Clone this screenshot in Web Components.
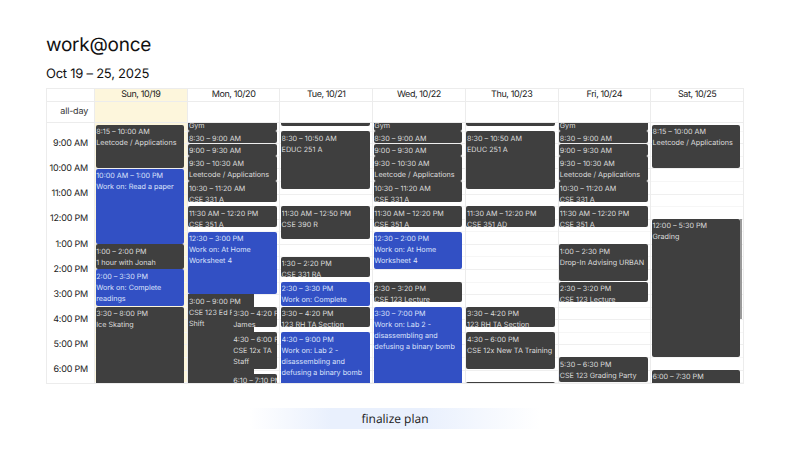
<!DOCTYPE html>
<html>
<head>
<meta charset="utf-8">
<style>
  html, body { margin: 0; background: #fff; }
  body { width: 806px; height: 467px; overflow: hidden; font-family: Inter, "Liberation Sans", sans-serif; text-rendering: geometricPrecision; }
</style>
</head>
<body>
<plan-page>
  <week-calendar>
    <day-column label="Sun, 10/19" today>
      <cal-event start="8:15" end="10:00" label="8:15 – 10:00 AM">Leetcode / Applications</cal-event>
      <cal-event start="10:00" end="13:00" label="10:00 AM – 1:00 PM" kind="work">Work on: Read a paper</cal-event>
      <cal-event start="13:00" end="14:00" label="1:00 – 2:00 PM">1 hour with Jonah</cal-event>
      <cal-event start="14:00" end="15:30" label="2:00 – 3:30 PM" kind="work">Work on: Complete readings</cal-event>
      <cal-event start="15:30" end="20:00" label="3:30 – 8:00 PM">Ice Skating</cal-event>
    </day-column>
    <day-column label="Mon, 10/20">
      <cal-event start="7:35" end="8:30" label="7:35 – 8:30 AM">Gym</cal-event>
      <cal-event start="8:30" end="9:00" label="8:30 – 9:00 AM"></cal-event>
      <cal-event start="9:00" end="9:30" label="9:00 – 9:30 AM"></cal-event>
      <cal-event start="9:30" end="10:30" label="9:30 – 10:30 AM">Leetcode / Applications</cal-event>
      <cal-event start="10:30" end="11:20" label="10:30 – 11:20 AM">CSE 331 A</cal-event>
      <cal-event start="11:30" end="12:20" label="11:30 AM – 12:20 PM">CSE 351 A</cal-event>
      <cal-event start="12:30" end="15:00" label="12:30 – 3:00 PM" kind="work">Work on: At Home Worksheet 4</cal-event>
      <cal-event start="15:00" end="21:00" label="3:00 – 9:00 PM" lane="back">CSE 123 Ed Forum Shift</cal-event>
      <cal-event start="15:30" end="16:20" label="3:30 – 4:20 PM" lane="front">James</cal-event>
      <cal-event start="16:30" end="18:00" label="4:30 – 6:00 PM" lane="front">CSE 12x TA Staff Training</cal-event>
      <cal-event start="18:10" end="19:10" label="6:10 – 7:10 PM" lane="front"></cal-event>
    </day-column>
    <day-column label="Tue, 10/21">
      <cal-event start="7:00" end="8:20" label="7:00 – 8:20 AM"></cal-event>
      <cal-event start="8:30" end="10:50" label="8:30 – 10:50 AM">EDUC 251 A</cal-event>
      <cal-event start="11:30" end="12:50" label="11:30 AM – 12:50 PM">CSE 390 R</cal-event>
      <cal-event start="13:30" end="14:20" label="1:30 – 2:20 PM">CSE 331 RA</cal-event>
      <cal-event start="14:30" end="15:30" label="2:30 – 3:30 PM" kind="work">Work on: Complete readings</cal-event>
      <cal-event start="15:30" end="16:20" label="3:30 – 4:20 PM">123 RH TA Section</cal-event>
      <cal-event start="16:30" end="21:00" label="4:30 – 9:00 PM" kind="work">Work on: Lab 2 - disassembling and defusing a binary bomb</cal-event>
    </day-column>
    <day-column label="Wed, 10/22">
      <cal-event start="7:35" end="8:30" label="7:35 – 8:30 AM">Gym</cal-event>
      <cal-event start="8:30" end="9:00" label="8:30 – 9:00 AM"></cal-event>
      <cal-event start="9:00" end="9:30" label="9:00 – 9:30 AM"></cal-event>
      <cal-event start="9:30" end="10:30" label="9:30 – 10:30 AM">Leetcode / Applications</cal-event>
      <cal-event start="10:30" end="11:20" label="10:30 – 11:20 AM">CSE 331 A</cal-event>
      <cal-event start="11:30" end="12:20" label="11:30 AM – 12:20 PM">CSE 351 A</cal-event>
      <cal-event start="12:30" end="14:00" label="12:30 – 2:00 PM" kind="work">Work on: At Home Worksheet 4</cal-event>
      <cal-event start="14:30" end="15:20" label="2:30 – 3:20 PM">CSE 123 Lecture</cal-event>
      <cal-event start="15:30" end="19:00" label="3:30 – 7:00 PM" kind="work">Work on: Lab 2 - disassembling and defusing a binary bomb</cal-event>
    </day-column>
    <day-column label="Thu, 10/23">
      <cal-event start="7:00" end="8:20" label="7:00 – 8:20 AM"></cal-event>
      <cal-event start="8:30" end="10:50" label="8:30 – 10:50 AM">EDUC 251 A</cal-event>
      <cal-event start="11:30" end="12:20" label="11:30 AM – 12:20 PM">CSE 351 AD</cal-event>
      <cal-event start="15:30" end="16:20" label="3:30 – 4:20 PM">123 RH TA Section</cal-event>
      <cal-event start="16:30" end="18:00" label="4:30 – 6:00 PM">CSE 12x New TA Training</cal-event>
      <cal-event start="18:30" end="19:30" label="6:30 – 7:30 PM"></cal-event>
    </day-column>
    <day-column label="Fri, 10/24">
      <cal-event start="7:35" end="8:30" label="7:35 – 8:30 AM">Gym</cal-event>
      <cal-event start="8:30" end="9:00" label="8:30 – 9:00 AM"></cal-event>
      <cal-event start="9:00" end="9:30" label="9:00 – 9:30 AM"></cal-event>
      <cal-event start="9:30" end="10:30" label="9:30 – 10:30 AM">Leetcode / Applications</cal-event>
      <cal-event start="10:30" end="11:20" label="10:30 – 11:20 AM">CSE 331 A</cal-event>
      <cal-event start="11:30" end="12:20" label="11:30 AM – 12:20 PM">CSE 351 A</cal-event>
      <cal-event start="13:00" end="14:30" label="1:00 – 2:30 PM">Drop-In Advising URBAN</cal-event>
      <cal-event start="14:30" end="15:20" label="2:30 – 3:20 PM">CSE 123 Lecture</cal-event>
      <cal-event start="17:30" end="18:30" label="5:30 – 6:30 PM">CSE 123 Grading Party</cal-event>
    </day-column>
    <day-column label="Sat, 10/25">
      <cal-event start="8:15" end="10:00" label="8:15 – 10:00 AM">Leetcode / Applications</cal-event>
      <cal-event start="12:00" end="17:30" label="12:00 – 5:30 PM">Grading</cal-event>
      <cal-event start="18:00" end="19:30" label="6:00 – 7:30 PM"></cal-event>
      <scroll-thumb start="12:00" end="16:00"></scroll-thumb>
    </day-column>
  </week-calendar>
</plan-page>

<script>
const HOUR = 25.15;
const SLOT = HOUR / 12;      // 5 minute rows
const FIRST_HOUR = 7;
const SLOTS = 14 * 12;
const SKIP = 29.7;           // calendar is scrolled down a bit

const toRow = (t) => {
    const [h, m] = t.split(':').map(Number);
    return (h - FIRST_HOUR) * 12 + Math.round(m / 5) + 1;
};

customElements.define('plan-page', class PlanPage extends HTMLElement {
    constructor() {
        super();
        this.attachShadow({ mode: "open" });
        this.shadowRoot.innerHTML = `
            <style>
                :host { display: block; padding: 33px 62px 0 46px; color: #111; }
                h1 { margin: 0; font: 400 19px/23px Inter, sans-serif; letter-spacing: -0.25px; }
                h2 { margin: 10px 0 5px; font: 400 13px/17px Inter, sans-serif; letter-spacing: -0.25px; }
                .foot { display: flex; justify-content: center; margin: 24px 0 0 -46px; width: 806px; }
            </style>
            <h1>work@once</h1>
            <h2>Oct 19 – 25, 2025</h2>
            <slot></slot>
            <div class="foot"><finalize-button>finalize plan</finalize-button></div>
        `;
    }
});

customElements.define('finalize-button', class FinalizeButton extends HTMLElement {
    constructor() {
        super();
        this.attachShadow({ mode: "open" });
        this.shadowRoot.innerHTML = `
            <style>
                :host {
                    display: block;
                    width: 290px;
                    margin-left: -16px;
                    text-align: center;
                    font: 400 12px/21px "Open Sans", sans-serif;
                    color: #1a1a1a;
                    background: linear-gradient(90deg, #fff 0%, #e9f0fd 28%, #e9f0fd 60%, #fff 100%);
                }
            </style>
            <slot></slot>
        `;
    }
});

customElements.define('week-calendar', class WeekCalendar extends HTMLElement {
    constructor() {
        super();
        this.attachShadow({ mode: "open" });
    }

    connectedCallback() {
        const hours = ['7:00 AM', '8:00 AM', '9:00 AM', '10:00 AM', '11:00 AM', '12:00 PM', '1:00 PM', '2:00 PM',
            '3:00 PM', '4:00 PM', '5:00 PM', '6:00 PM', '7:00 PM'];
        this.shadowRoot.innerHTML = `
            <style>
                :host { display: block; width: 698px; height: 296px; border: 1px solid #ececec; box-sizing: border-box; }
                .wrap { display: flex; height: 100%; }
                .times { width: 47px; flex: none; display: flex; flex-direction: column; }
                .head { height: 12px; border-bottom: 1px solid #ececec; }
                .allday {
                    height: 20px; border-bottom: 1px solid #ececec;
                    font: 400 9px/20px Inter, sans-serif; letter-spacing: -0.2px; color: #333;
                    text-align: right; padding-right: 6px;
                }
                .clip { flex: 1; overflow: hidden; min-height: 0; }
                .rows { margin-top: ${-SKIP - HOUR / 2}px; }
                .rows div {
                    height: ${HOUR}px;
                    font: 400 9px/${HOUR}px Inter, sans-serif;
                    letter-spacing: -0.2px;
                    white-space: nowrap;
                    color: #222;
                    text-align: right;
                    padding-right: 6px;
                }
                .days { flex: 1; min-width: 0; display: grid; grid-template-columns: repeat(7, minmax(0, 1fr)); }
            </style>
            <div class="wrap">
                <div class="times">
                    <div class="head"></div>
                    <div class="allday">all-day</div>
                    <div class="clip"><div class="rows">${hours.map(h => `<div>${h}</div>`).join('')}</div></div>
                </div>
                <div class="days"><slot></slot></div>
            </div>
        `;
    }
});

customElements.define('day-column', class DayColumn extends HTMLElement {
    constructor() {
        super();
        this.attachShadow({ mode: "open" });
    }

    connectedCallback() {
        const bg = this.hasAttribute('today') ? '#fdf6dc' : '#fff';
        this.shadowRoot.innerHTML = `
            <style>
                :host { display: flex; flex-direction: column; min-width: 0; min-height: 0; border-left: 1px solid #ececec; }
                .head {
                    height: 12px; flex: none; border-bottom: 1px solid #ececec; background: ${bg};
                    font: 400 9px/12px Inter, sans-serif; letter-spacing: -0.4px; color: #222; text-align: center;
                }
                .allday { height: 20px; border-bottom: 1px solid #ececec; background: ${bg}; flex: none; }
                .clip { flex: 1; overflow: hidden; min-height: 0; background: ${bg}; }
                .grid {
                    display: grid;
                    margin-top: ${-SKIP}px;
                    padding-right: 2.6px;
                    grid-template-columns: 44px 22px 1fr;
                    grid-template-rows: repeat(${SLOTS}, ${SLOT}px);
                }
                .lines {
                    grid-row: 1 / -1;
                    grid-column: 1 / -1;
                    margin-right: -2.6px;
                    background: repeating-linear-gradient(
                        to bottom,
                        #efefef 0, #efefef 1px,
                        transparent 1px, transparent ${HOUR / 2}px,
                        #f6f6f6 ${HOUR / 2}px, #f6f6f6 ${HOUR / 2 + 1}px,
                        transparent ${HOUR / 2 + 1}px, transparent ${HOUR}px);
                }
            </style>
            <div class="head">${this.getAttribute('label')}</div>
            <div class="allday"></div>
            <div class="clip"><div class="grid"><div class="lines"></div><slot></slot></div></div>
        `;
    }
});

customElements.define('cal-event', class CalEvent extends HTMLElement {
    constructor() {
        super();
        this.attachShadow({ mode: "open" });
    }

    connectedCallback() {
        const work = this.getAttribute('kind') === 'work';
        const lane = this.getAttribute('lane');
        const column = lane === 'back' ? '1 / 3' : lane === 'front' ? '2 / 4' : '1 / 4';
        this.shadowRoot.innerHTML = `
            <style>
                :host {
                    display: block;
                    min-width: 0;
                    min-height: 0;
                    overflow: hidden;
                    grid-row: ${toRow(this.getAttribute('start'))} / ${toRow(this.getAttribute('end'))};
                    grid-column: ${column};
                    margin: 0 0 0.5px 0.5px;
                    padding: 1.5px 0 0 0.7px;
                    border-radius: ${lane === 'back' ? '0' : '2px'};
                    background: ${work ? '#3250c4' : '#3f3f3f'};
                    color: ${work ? '#dbe2fb' : '#dcdcdc'};
                    font: 400 7.2px/11px Inter, sans-serif;
                    box-sizing: border-box;
                }
                :host([lane="front"]) { margin-left: 0; padding-left: 1.5px; }
                .time { white-space: nowrap; overflow: hidden; }
            </style>
            <div class="time">${this.getAttribute('label')}</div>
            <div><slot></slot></div>
        `;
    }
});

customElements.define('scroll-thumb', class ScrollThumb extends HTMLElement {
    constructor() {
        super();
        this.attachShadow({ mode: "open" });
    }

    connectedCallback() {
        this.shadowRoot.innerHTML = `
            <style>
                :host {
                    display: block;
                    grid-column: 3;
                    grid-row: ${toRow(this.getAttribute('start'))} / ${toRow(this.getAttribute('end'))};
                    justify-self: end;
                    width: 1.5px;
                    margin-right: -1.5px;
                    background: #9a9a9a;
                }
            </style>
        `;
    }
});
</script>
</body>
</html>
